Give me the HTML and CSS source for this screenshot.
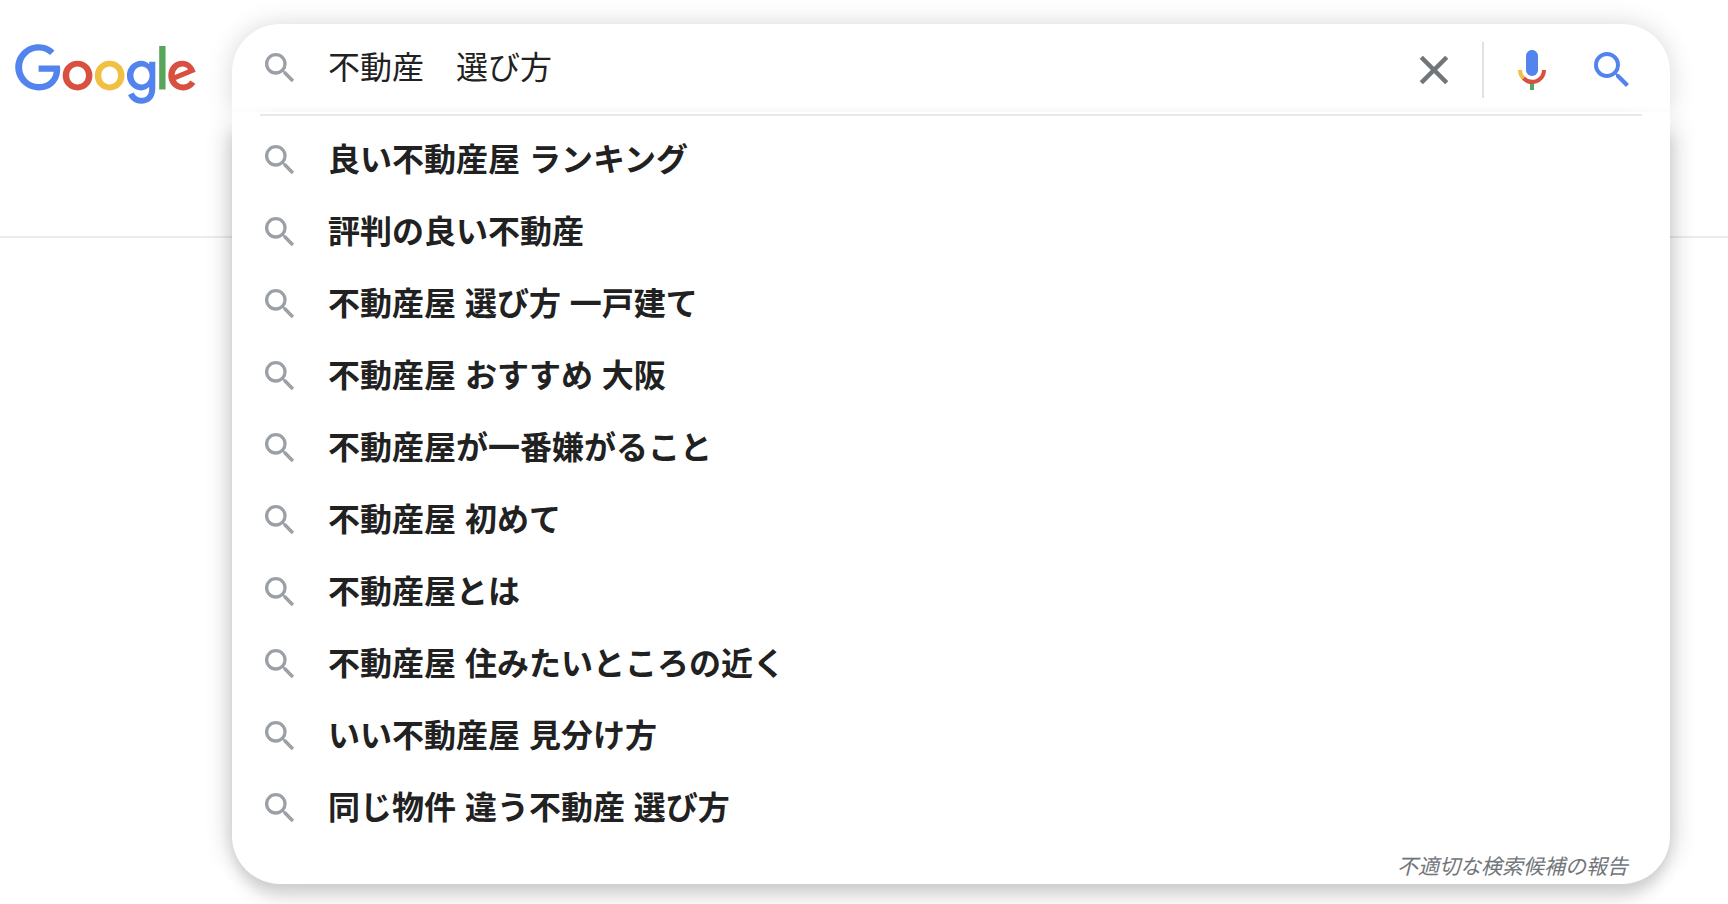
FILE: index.html
```html
<!DOCTYPE html>
<html lang="ja">
<head>
    <meta charset="UTF-8">
    <meta name="viewport" content="width=device-width, initial-scale=1.0">
    <title>不動産　選び方 - Google 検索</title>
    <link rel="stylesheet" href="styles.css">
</head>
<body>
    <!-- shared magnifier icon -->
    <svg class="sprite" aria-hidden="true">
        <symbol id="magnifier" viewBox="0 0 24 24">
            <path d="M15.5 14h-.79l-.28-.27A6.471 6.471 0 0 0 16 9.5 6.5 6.5 0 1 0 9.5 16c1.61 0 3.09-.59 4.23-1.57l.27.28v.79l5 4.99L20.49 19l-4.99-5zm-6 0C7.01 14 5 11.99 5 9.5S7.01 5 9.5 5 14 7.01 14 9.5 11.99 14 9.5 14z"/>
        </symbol>
    </svg>

    <header class="header">
        <a class="logo" href="/" aria-label="Google">
            <svg viewBox="0 0 272 92" aria-hidden="true">
                <path class="red" d="M115.75 47.18c0 12.77-9.99 22.18-22.25 22.18s-22.25-9.41-22.25-22.18C71.25 34.32 81.24 25 93.5 25s22.25 9.32 22.25 22.18zm-9.74 0c0-7.98-5.79-13.44-12.51-13.44S80.99 39.2 80.99 47.18c0 7.9 5.79 13.44 12.51 13.44s12.51-5.55 12.51-13.44z"/>
                <path class="yellow" d="M163.75 47.18c0 12.77-9.99 22.18-22.25 22.18s-22.25-9.41-22.25-22.18c0-12.85 9.99-22.18 22.25-22.18s22.25 9.32 22.25 22.18zm-9.74 0c0-7.98-5.79-13.44-12.51-13.44s-12.51 5.46-12.51 13.44c0 7.9 5.79 13.44 12.51 13.44s12.51-5.55 12.51-13.44z"/>
                <path class="blue" d="M209.75 26.34v39.82c0 16.38-9.66 23.07-21.08 23.07-10.75 0-17.22-7.19-19.66-13.07l8.48-3.53c1.51 3.61 5.21 7.87 11.17 7.87 7.31 0 11.84-4.51 11.84-13v-3.19h-.34c-2.18 2.69-6.38 5.04-11.68 5.04-11.09 0-21.25-9.66-21.25-22.09 0-12.52 10.16-22.26 21.25-22.26 5.29 0 9.49 2.35 11.68 4.96h.34v-3.61h9.25zm-8.56 20.92c0-7.81-5.21-13.52-11.84-13.52-6.72 0-12.35 5.71-12.35 13.52 0 7.73 5.63 13.36 12.35 13.36 6.63 0 11.84-5.63 11.84-13.36z"/>
                <path class="green" d="M225 3v65h-9.5V3h9.5z"/>
                <path class="red" d="M262.02 54.48l7.56 5.04c-2.44 3.61-8.32 9.83-18.48 9.83-12.6 0-22.01-9.74-22.01-22.18 0-13.19 9.49-22.18 20.92-22.18 11.51 0 17.14 9.16 18.98 14.11l1.01 2.52-29.65 12.28c2.27 4.45 5.8 6.72 10.75 6.72 4.96 0 8.4-2.44 10.84-6.14zm-23.27-7.98l19.82-8.23c-1.09-2.77-4.37-4.7-8.23-4.7-4.95 0-11.84 4.37-11.59 12.93z"/>
                <path class="blue" d="M35.29 41.41V32H67c.31 1.64.47 3.58.47 5.68 0 7.06-1.93 15.79-8.15 22.01-6.05 6.3-13.78 9.66-24.02 9.66C16.32 69.35.36 53.89.36 34.91.36 15.93 16.32.47 35.3.47c10.5 0 17.98 4.12 23.6 9.49l-6.64 6.64c-4.03-3.78-9.49-6.72-16.97-6.72-13.86 0-24.7 11.17-24.7 25.03 0 13.86 10.84 25.03 24.7 25.03 8.99 0 14.11-3.61 17.39-6.89 2.66-2.66 4.41-6.46 5.1-11.65l-22.49.01z"/>
            </svg>
        </a>

        <form class="search" action="/search" role="search">
            <div class="search-box">
                <svg class="icon-small" aria-hidden="true"><use href="#magnifier"/></svg>
                <input class="search-input" type="text" name="q" value="不動産　選び方" aria-label="検索" autocomplete="off">
                <div class="actions">
                    <button class="icon-button clear" type="button" aria-label="クリア">
                        <svg viewBox="0 0 24 24" aria-hidden="true">
                            <path d="M19 6.41L17.59 5 12 10.59 6.41 5 5 6.41 10.59 12 5 17.59 6.41 19 12 13.41 17.59 19 19 17.59 13.41 12z"/>
                        </svg>
                    </button>
                    <span class="separator"></span>
                    <button class="icon-button" type="button" aria-label="音声検索">
                        <svg viewBox="0 0 24 24" aria-hidden="true">
                            <path class="blue" d="M12 15c1.66 0 3-1.31 3-2.97V5.01C15 3.35 13.66 2 12 2S9 3.34 9 5.01v7.02C9 13.69 10.34 15 12 15z"/>
                            <path class="green" d="M11 18.08h2V22h-2z"/>
                            <path class="yellow" d="M7.05 16.87C5.78 15.54 5 14.04 5 12h2c0 1.45.56 2.42 1.47 3.38v.32l-1.15 1.18z"/>
                            <path class="red" d="M12 16.93a4.97 5.25 0 0 1-3.54-1.55l-1.41 1.49C8.31 18.21 10.07 19 12 19c3.87 0 6.99-2.92 6.99-7H17c0 2.92-2.24 4.93-5 4.93z"/>
                        </svg>
                    </button>
                    <button class="icon-button submit" type="submit" aria-label="Google 検索">
                        <svg class="blue" aria-hidden="true"><use href="#magnifier"/></svg>
                    </button>
                </div>
            </div>

            <div class="suggestions">
                <hr class="divider">
                <ul class="suggestion-list">
                    <li><a class="suggestion" href="#"><svg class="icon-small" aria-hidden="true"><use href="#magnifier"/></svg>良い不動産屋 ランキング</a></li>
                    <li><a class="suggestion" href="#"><svg class="icon-small" aria-hidden="true"><use href="#magnifier"/></svg>評判の良い不動産</a></li>
                    <li><a class="suggestion" href="#"><svg class="icon-small" aria-hidden="true"><use href="#magnifier"/></svg>不動産屋 選び方 一戸建て</a></li>
                    <li><a class="suggestion" href="#"><svg class="icon-small" aria-hidden="true"><use href="#magnifier"/></svg>不動産屋 おすすめ 大阪</a></li>
                    <li><a class="suggestion" href="#"><svg class="icon-small" aria-hidden="true"><use href="#magnifier"/></svg>不動産屋が一番嫌がること</a></li>
                    <li><a class="suggestion" href="#"><svg class="icon-small" aria-hidden="true"><use href="#magnifier"/></svg>不動産屋 初めて</a></li>
                    <li><a class="suggestion" href="#"><svg class="icon-small" aria-hidden="true"><use href="#magnifier"/></svg>不動産屋とは</a></li>
                    <li><a class="suggestion" href="#"><svg class="icon-small" aria-hidden="true"><use href="#magnifier"/></svg>不動産屋 住みたいところの近く</a></li>
                    <li><a class="suggestion" href="#"><svg class="icon-small" aria-hidden="true"><use href="#magnifier"/></svg>いい不動産屋 見分け方</a></li>
                    <li><a class="suggestion" href="#"><svg class="icon-small" aria-hidden="true"><use href="#magnifier"/></svg>同じ物件 違う不動産 選び方</a></li>
                </ul>
                <div class="report"><a href="#">不適切な検索候補の報告</a></div>
            </div>
        </form>
    </header>
</body>
</html>
```
FILE: styles.css
```css
* {
    box-sizing: border-box;
}
body {
    font-family: "Liberation Sans", "Noto Sans CJK JP", sans-serif;
    margin: 0;
    min-height: 100vh;
    background-color: #fff;
    color: #212121;
}
.sprite {
    position: absolute;
    width: 0;
    height: 0;
}
.blue {
    fill: #5383ec;
}
.red {
    fill: #d85140;
}
.yellow {
    fill: #f1bf42;
}
.green {
    fill: #58a65c;
}

/* header */
.header {
    display: flex;
    align-items: flex-start;
    gap: 35px;
    min-height: 238px;
    padding: 24px 58px 0 15px;
    border-bottom: 2px solid #ebebeb;
}
.logo {
    flex: none;
    width: 182px;
    padding-top: 20px;
}
.logo svg {
    display: block;
    width: 100%;
}

/* search box */
.search {
    position: relative;
    flex: 1;
}
.search-box {
    display: flex;
    align-items: center;
    gap: 28px;
    height: 88px;
    padding: 0 34px 0 28px;
    border-radius: 48px 48px 0 0;
    background: #fff;
    box-shadow: 0 0 24px 0 rgba(64, 60, 67, 0.2);
}
.icon-small {
    flex: none;
    width: 40px;
    height: 40px;
    fill: #9aa0a6;
}
.search-input {
    flex: 1;
    min-width: 0;
    height: 40px;
    padding: 0;
    border: 0;
    outline: 0;
    background: transparent;
    color: inherit;
    font: inherit;
    font-size: 32px;
    line-height: 40px;
}
.actions {
    display: flex;
    align-items: center;
    gap: 24px;
    padding-top: 4px;
}
.icon-button {
    width: 48px;
    height: 48px;
    padding: 0;
    border: 0;
    background: none;
    cursor: pointer;
}
.icon-button svg {
    display: block;
    width: 48px;
    height: 48px;
}
.clear {
    fill: #70757a;
    stroke: #70757a;
    stroke-width: 0.3;
    stroke-linejoin: round;
}
.submit {
    margin-left: 8px;
}
.separator {
    width: 2px;
    height: 56px;
    background: #dfe1e5;
}

/* suggestions, opened over the page below the box */
.suggestions {
    position: absolute;
    top: 100%;
    left: 0;
    right: 0;
    padding-top: 2px;
    border-radius: 0 0 48px 48px;
    background: #fff;
    box-shadow: 0 18px 16px -6px rgba(64, 60, 67, 0.24),
        20px 0 22px -16px rgba(64, 60, 67, 0.24),
        -20px 0 22px -16px rgba(64, 60, 67, 0.24);
}
.divider {
    height: 2px;
    margin: 0 28px 8px;
    border: 0;
    background: #e8eaed;
}
.suggestion-list {
    margin: 0;
    padding: 0;
    list-style: none;
}
.suggestion {
    display: flex;
    align-items: center;
    gap: 28px;
    height: 72px;
    padding: 0 28px;
    color: inherit;
    font-size: 32px;
    font-weight: bold;
    line-height: 40px;
    text-decoration: none;
}
.report {
    padding: 6px 42px 0 0;
    font-size: 21px;
    font-style: italic;
    line-height: 34px;
    text-align: right;
}
.report a {
    color: #70757a;
    text-decoration: none;
}
```
